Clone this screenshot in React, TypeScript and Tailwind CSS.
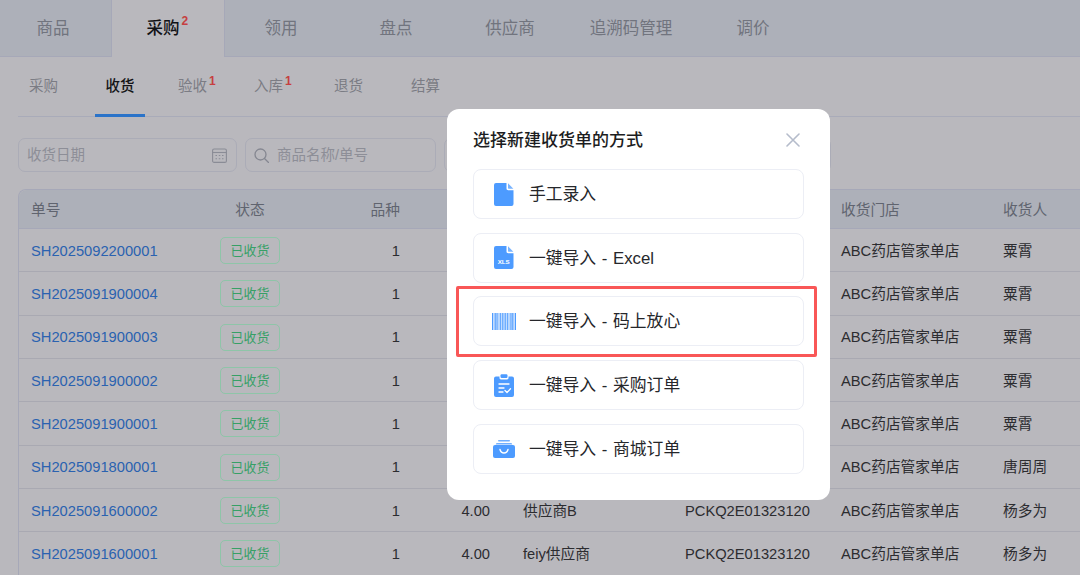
import React from "react";

const font = { fontFamily: '"Liberation Sans", "Noto Sans CJK SC", sans-serif' };

const rows = [
  ["SH2025092200001", "30.00", "", "PCKQ2E01323120", "ABC药店管家单店", "粟霄"],
  ["SH2025091900004", "40.00", "", "PCKQ2E01323120", "ABC药店管家单店", "粟霄"],
  ["SH2025091900003", "4.00", "", "PCKQ2E01323120", "ABC药店管家单店", "粟霄"],
  ["SH2025091900002", "4.00", "", "PCKQ2E01323120", "ABC药店管家单店", "粟霄"],
  ["SH2025091900001", "40.00", "", "PCKQ2E01323120", "ABC药店管家单店", "粟霄"],
  ["SH2025091800001", "20.00", "", "PCKQ2E01323120", "ABC药店管家单店", "唐周周"],
  ["SH2025091600002", "4.00", "供应商B", "PCKQ2E01323120", "ABC药店管家单店", "杨多为"],
  ["SH2025091600001", "4.00", "feiy供应商", "PCKQ2E01323120", "ABC药店管家单店", "杨多为"],
];

const gridCols = "grid grid-cols-[181px_100px_100px_90px_195px_156px_162px_77px] items-center";

const Blue = "#4d9bff";

function FileIcon() {
  return (
    <svg width="20" height="23" viewBox="0 0 20 23">
      <path d="M2 0h10.5v5.5c0 1 .7 1.7 1.7 1.7H19.5V21a2 2 0 0 1-2 2H2a2 2 0 0 1-2-2V2a2 2 0 0 1 2-2z" fill={Blue} />
      <path d="M14 .3l5.4 5.4H14.6a.6.6 0 0 1-.6-.6z" fill={Blue} opacity="0.75" />
    </svg>
  );
}

function XlsIcon() {
  return (
    <svg width="20" height="23" viewBox="0 0 20 23">
      <path d="M2 0h10.5v5.5c0 1 .7 1.7 1.7 1.7H19.5V21a2 2 0 0 1-2 2H2a2 2 0 0 1-2-2V2a2 2 0 0 1 2-2z" fill={Blue} />
      <path d="M14 .3l5.4 5.4H14.6a.6.6 0 0 1-.6-.6z" fill={Blue} opacity="0.75" />
      <text x="9.7" y="17.5" textAnchor="middle" fontSize="6.2" fontWeight="700" fill="#fff" fontFamily="Liberation Sans, sans-serif">XLS</text>
    </svg>
  );
}

function BarcodeIcon() {
  const bars: [number, number][] = [
    [0, 1.2], [1.8, 0.8], [3.2, 1.4], [5.2, 0.8], [6.6, 0.8], [8, 1.4], [10, 0.8], [11.4, 1.2], [13.2, 0.8], [14.6, 1.4], [16.6, 0.8], [18, 0.8], [19.4, 1.4], [21.4, 0.8], [22.8, 1.2],
  ];
  return (
    <svg width="24" height="17" viewBox="0 0 24 17">
      {bars.map(([x, w], i) => (
        <rect key={i} x={x} y="0" width={w} height="17" fill={Blue} opacity={i % 2 ? 0.85 : 1} />
      ))}
    </svg>
  );
}

function ClipboardIcon() {
  return (
    <svg width="20" height="23" viewBox="0 0 20 23">
      <path d="M2 2.500h3.500V4c0 .8.6 1.400 1.400 1.400h6.200c.8 0 1.400-.6 1.400-1.400V2.500H18a2 2 0 0 1 2 2V21a2 2 0 0 1-2 2H2a2 2 0 0 1-2-2V4.500a2 2 0 0 1 2-2z" fill={Blue} />
      <rect x="6.500" y="0.300" width="7" height="3.700" rx="1.200" fill={Blue} />
      <path d="M5 10h10M5 14h5M5 18h4" stroke="#fff" strokeWidth="1.300" strokeLinecap="round" />
      <path d="M11 16.500l2 2 3.500-3.700" stroke="#fff" strokeWidth="1.300" fill="none" strokeLinecap="round" strokeLinejoin="round" />
    </svg>
  );
}

function BagIcon() {
  return (
    <svg width="22" height="18" viewBox="0 0 22 18">
      <rect x="5" y="0" width="12" height="1.500" rx="0.750" fill={Blue} opacity="0.8" />
      <path d="M3.500 3h15l.8 1.500H2.700z" fill={Blue} opacity="0.8" />
      <path d="M2 5h18a2 2 0 0 1 2 2v9a2 2 0 0 1-2 2H2a2 2 0 0 1-2-2V7a2 2 0 0 1 2-2z" fill={Blue} />
      <path d="M7 9.500c.6 2.300 2.200 3.500 4 3.500s3.400-1.200 4-3.500" stroke="#fff" strokeWidth="1.400" fill="none" strokeLinecap="round" />
    </svg>
  );
}

const options: { label: string; icon: React.ReactNode }[] = [
  { label: "手工录入", icon: <FileIcon /> },
  { label: "一键导入 - Excel", icon: <XlsIcon /> },
  { label: "一键导入 - 码上放心", icon: <BarcodeIcon /> },
  { label: "一键导入 - 采购订单", icon: <ClipboardIcon /> },
  { label: "一键导入 - 商城订单", icon: <BagIcon /> },
];

const topTabs: [string, string][] = [
  ["领用", "w-[112px]"],
  ["盘点", "w-[118px]"],
  ["供应商", "w-[110px]"],
  ["追溯码管理", "w-[132px]"],
  ["调价", "w-[112px]"],
];

const subTabs: { t: string; cls: string; badge?: string; active?: boolean }[] = [
  { t: "采购", cls: "w-[77px] pl-[11px] pt-[1px]" },
  { t: "收货", cls: "w-[50px] justify-center", active: true },
  { t: "验收", cls: "w-[76px] ml-[33px] pt-[1px]", badge: "1" },
  { t: "入库", cls: "w-[80px] pt-[1px]", badge: "1" },
  { t: "退货", cls: "w-[77px] pt-[1px]" },
  { t: "结算", cls: "w-[60px] pt-[1px]" },
];

export default function App() {
  return (
    <div style={font} className="relative w-[1080px] h-[575px] overflow-hidden bg-[#b9b8bd]">
      {/* top tabs */}
      <div className="flex h-[57px] bg-[#adb0b9] border-b border-[#a6a8b8] text-[16.5px] text-[#71747e]">
        <div className="w-[112px] pr-[5px] flex items-center justify-center border-r border-[#a6a8b8]">商品</div>
        <div className="w-[113px] h-[57px] pr-[10px] flex items-center justify-center bg-[#b9b8bd] border-r border-[#a6a8b8] text-[#111216] font-medium">
          <span className="relative">
            采购
            <span className="absolute left-[35px] top-[-4px] text-[12px] font-bold text-[#c63f41]">2</span>
          </span>
        </div>
        {topTabs.map(([t, w]) => (
          <div key={t} className={`${w} flex items-center justify-center`}>{t}</div>
        ))}
      </div>

      {/* sub tabs */}
      <div className="ml-[18px] h-[60px] flex items-stretch border-b border-[#a9abb9] text-[14.5px] text-[#7b7c84]">
        {subTabs.map((s) => (
          <div key={s.t} className={`flex items-center ${s.cls} ${s.active ? "text-[#131417] font-medium border-b-[3px] border-[#2a73c9] mb-[-1px] pt-[3px]" : ""}`}>
            <span className="relative">
              {s.t}
              {s.badge && <span className="absolute left-[31px] top-[-4px] text-[12px] font-bold text-[#c63f41]">{s.badge}</span>}
            </span>
          </div>
        ))}
      </div>

      {/* filters */}
      <div className="ml-[18px] mt-[21px] flex gap-[8px] text-[14.5px] text-[#8d8e97]">
        <div className="w-[219px] h-[34px] flex items-center justify-between pl-[8px] pr-[9px] rounded-[7px] border border-[#abacb7]">
          <span className="pt-[2px]">收货日期</span>
          <svg width="15" height="15" viewBox="0 0 15 15" fill="none" stroke="#8a8c96" strokeWidth="1.100">
            <rect x="0.600" y="1" width="13.800" height="13.400" rx="1.500" />
            <path d="M.6 4.500h13.800" />
            <path d="M3.500 7.500h1.500M6.800 7.500h1.500M10 7.500h1.500M3.500 10.800h1.500M6.800 10.800h1.500M10 10.800h1.500" />
          </svg>
        </div>
        <div className="w-[191px] h-[34px] flex items-center gap-[8px] pl-[8px] rounded-[7px] border border-[#abacb7]">
          <svg width="15" height="15" viewBox="0 0 15 15" fill="none" stroke="#858791" strokeWidth="1.300">
            <circle cx="6.500" cy="6.500" r="5.500" />
            <path d="M10.500 10.500l4 4" strokeLinecap="round" />
          </svg>
          <span className="pt-[2px]">商品名称/单号</span>
        </div>
        <div className="w-[387px] h-[34px] rounded-[7px] border border-[#abacb7]" />
      </div>

      {/* table */}
      <div className="ml-[18px] mt-[17px] border-l border-t border-[#a6a8b8] rounded-tl-[8px] text-[14.7px]">
        <div className={`${gridCols} h-[39px] pt-[2px] bg-[#adb0b9] border-b border-[#a6a8b8] rounded-tl-[8px] text-[#60646f]`}>
          <div className="pl-[12px]">单号</div>
          <div className="text-center">状态</div>
          <div className="text-right">品种</div>
          <div className="text-right"></div>
          <div className="pl-[33px]"></div>
          <div></div>
          <div>收货门店</div>
          <div>收货人</div>
        </div>
        {rows.map((r) => (
          <div key={r[0]} className={`${gridCols} h-[43.330px] pt-[1px] border-b border-[#a9a9b2] text-[#2c2c30]`}>
            <div className="pl-[12px] text-[#2a62b0]">{r[0]}</div>
            <div className="flex justify-center">
              <span className="w-[60px] h-[27px] flex items-center justify-center rounded-[5px] border border-[#8ec5a8] text-[13px] text-[#36a066]">已收货</span>
            </div>
            <div className="text-right">1</div>
            <div className="text-right">{r[1]}</div>
            <div className="pl-[33px]">{r[2]}</div>
            <div>{r[3]}</div>
            <div>{r[4]}</div>
            <div>{r[5]}</div>
          </div>
        ))}
      </div>

      {/* modal */}
      <div className="absolute left-[447px] top-[109px] w-[383px] h-[391px] bg-white rounded-[12px] px-[26px] pt-[60px]">
        <div className="absolute left-[26px] top-[20px] text-[17px] font-medium leading-[24px] text-[#1c1d21]">选择新建收货单的方式</div>
        <svg className="absolute left-[339px] top-[24px]" width="14" height="14" viewBox="0 0 14 14" stroke="#b5bccb" strokeWidth="1.600" strokeLinecap="round">
          <path d="M1 1l12 12M13 1L1 13" />
        </svg>
        <div className="flex flex-col gap-[13.700px]">
          {options.map((o) => (
            <div key={o.label} className="h-[50px] flex items-center rounded-[8px] border border-[#eceef5] text-[16.800px] text-[#26272b]">
              <span className="w-[55px] flex justify-center pl-[5px]">{o.icon}</span>
              <span className="pt-[1px] [word-spacing:1px]">{o.label}</span>
            </div>
          ))}
        </div>
      </div>

      {/* red highlight */}
      <div className="absolute left-[456px] top-[286px] w-[361px] h-[71px] border-[3px] border-[#f95757] rounded-[2px]" />
    </div>
  );
}
